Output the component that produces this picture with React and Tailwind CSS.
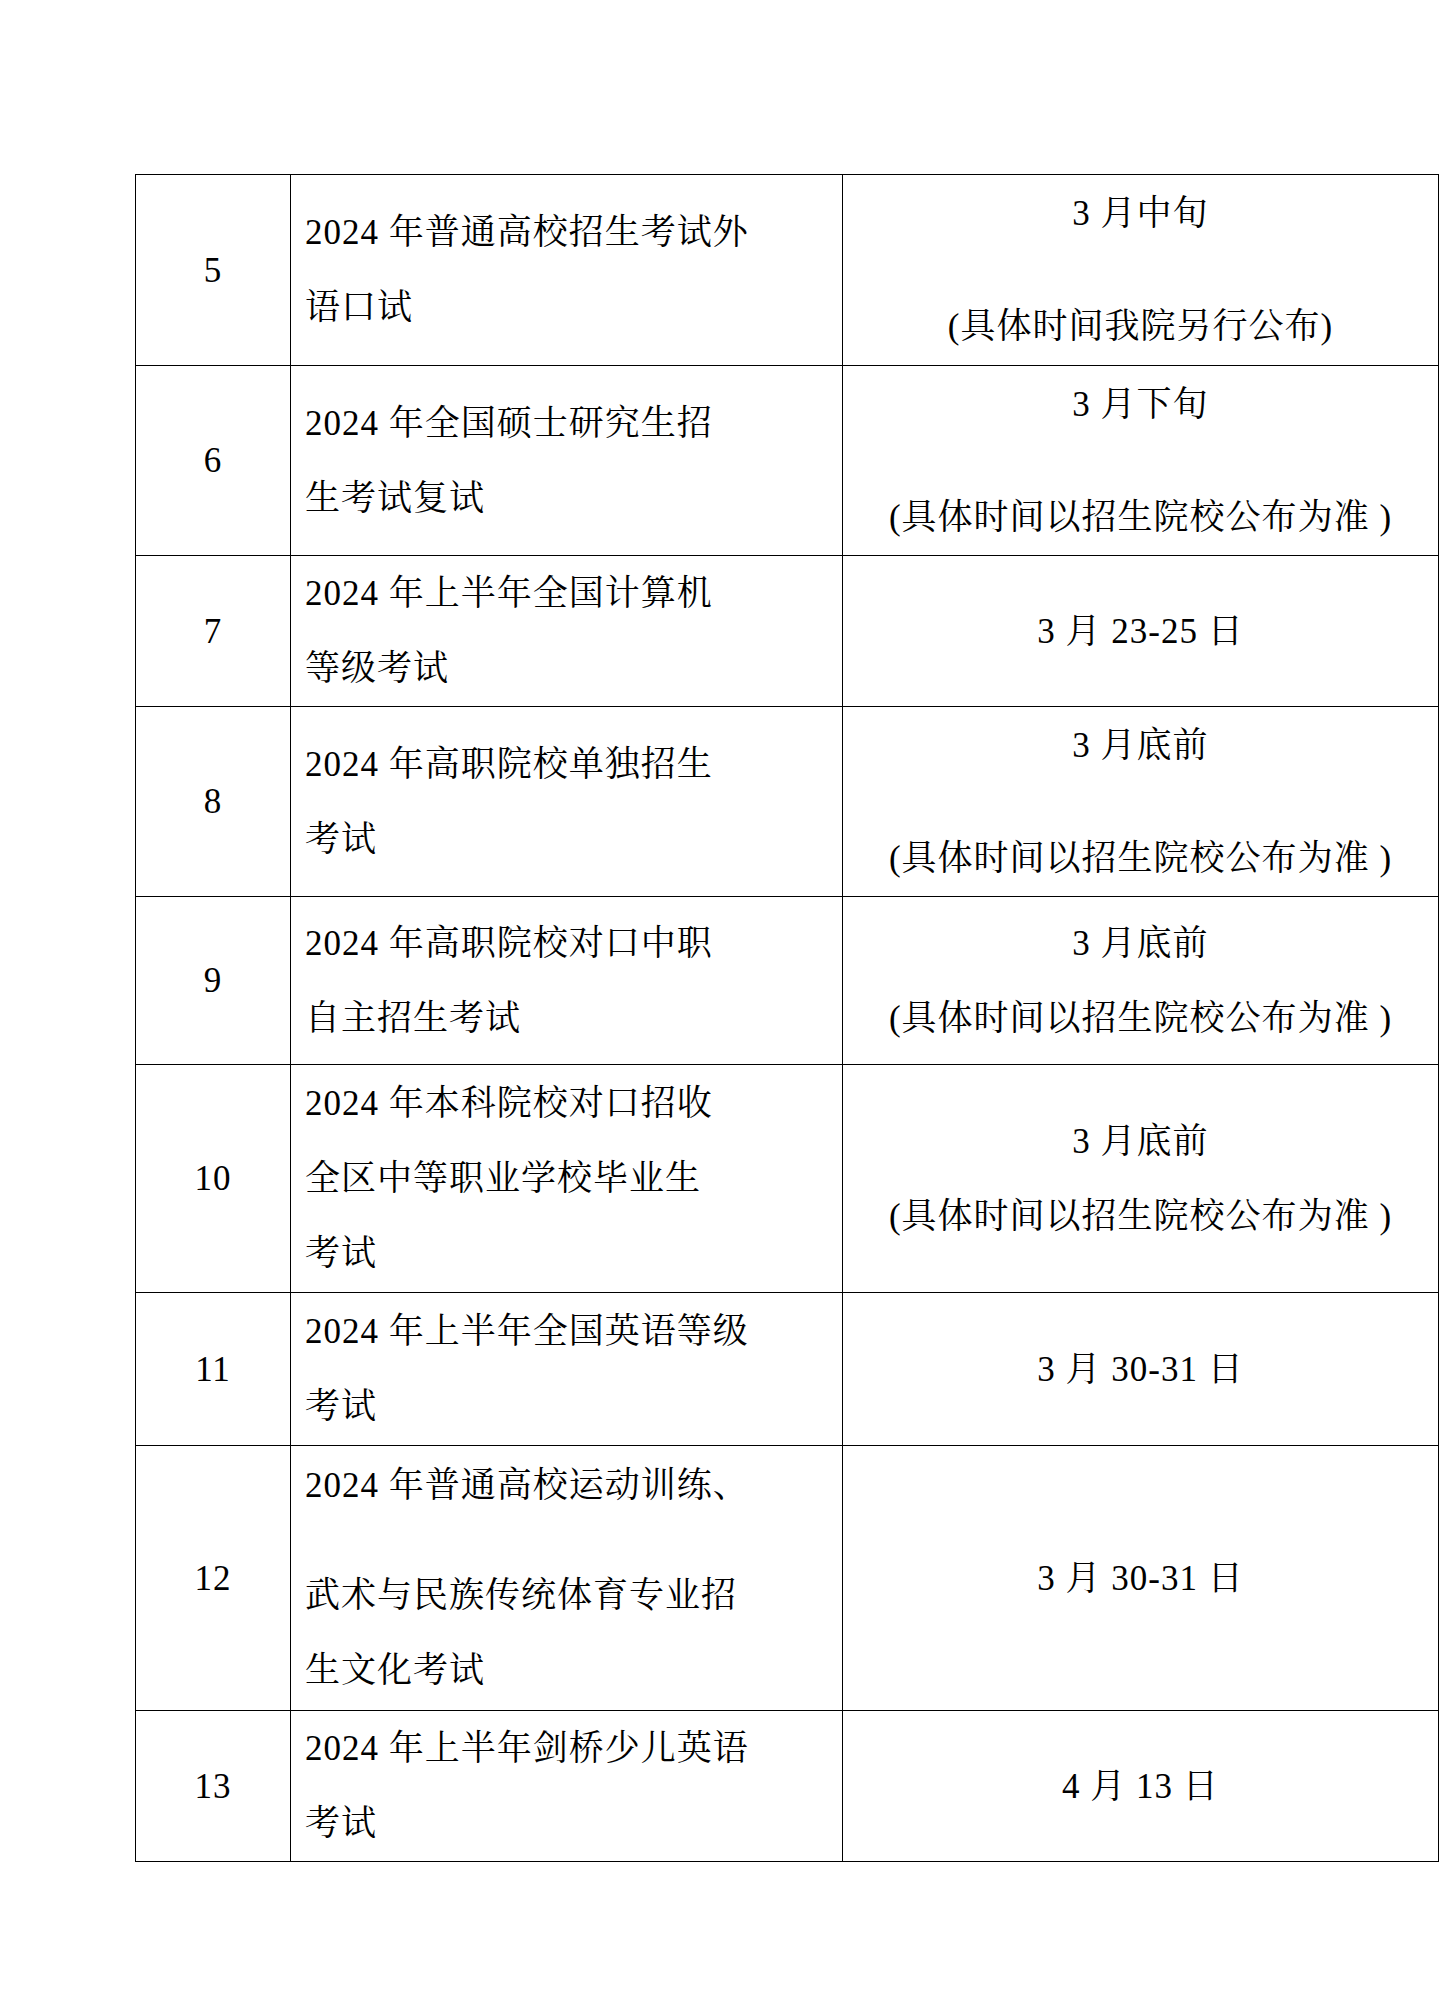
import React from "react";

const rows = [
  {
    no: "5",
    name: ["2024 年普通高校招生考试外", "语口试"],
    time: ["3 月中旬", "(具体时间我院另行公布)"],
    wide: true,
    h: "h-[191px]",
  },
  {
    no: "6",
    name: ["2024 年全国硕士研究生招", "生考试复试"],
    time: ["3 月下旬", "(具体时间以招生院校公布为准 )"],
    wide: true,
    h: "h-[190px]",
  },
  {
    no: "7",
    name: ["2024 年上半年全国计算机", "等级考试"],
    time: ["3 月 23-25 日"],
    h: "h-[151px]",
  },
  {
    no: "8",
    name: ["2024 年高职院校单独招生", "考试"],
    time: ["3 月底前", "(具体时间以招生院校公布为准 )"],
    wide: true,
    h: "h-[190px]",
  },
  {
    no: "9",
    name: ["2024 年高职院校对口中职", "自主招生考试"],
    time: ["3 月底前", "(具体时间以招生院校公布为准 )"],
    h: "h-[168px]",
  },
  {
    no: "10",
    name: ["2024 年本科院校对口招收", "全区中等职业学校毕业生", "考试"],
    time: ["3 月底前", "(具体时间以招生院校公布为准 )"],
    h: "h-[228px]",
  },
  {
    no: "11",
    name: ["2024 年上半年全国英语等级", "考试"],
    time: ["3 月 30-31 日"],
    h: "h-[153px]",
  },
  {
    no: "12",
    name: ["2024 年普通高校运动训练、", "武术与民族传统体育专业招", "生文化考试"],
    time: ["3 月 30-31 日"],
    gapAfterFirst: true,
    h: "h-[265px]",
  },
  {
    no: "13",
    name: ["2024 年上半年剑桥少儿英语", "考试"],
    time: ["4 月 13 日"],
    h: "h-[151px]",
  },
];

function Row({ row }) {
  return (
    <div className={"grid grid-cols-[155px_552px_596px] " + row.h}>
      <div className="flex items-center justify-center border-r border-b border-black">
        {row.no}
      </div>
      <div className="flex flex-col justify-center border-r border-b border-black pl-[14px] whitespace-nowrap">
        {row.name.map((line, i) => (
          <div
            key={i}
            className={row.gapAfterFirst && i === 0 ? "mb-[35px]" : ""}
          >
            {line}
          </div>
        ))}
      </div>
      <div
        className={
          "flex flex-col items-center justify-center border-r border-b border-black whitespace-nowrap " +
          (row.wide ? "gap-[38px]" : "gap-0")
        }
      >
        {row.time.map((line, i) => (
          <div key={i}>{line}</div>
        ))}
      </div>
    </div>
  );
}

export default function App() {
  return (
    <div className="min-h-[2008px] w-[1440px] bg-white pt-[174px] text-black [font-family:'Liberation_Serif','Noto_Serif_CJK_SC','Noto_Sans_CJK_SC',serif] text-[35px] leading-[75px] tracking-[1px]">
      <div className="ml-[135px] w-[1304px] border-t border-l border-black">
        {rows.map((row) => (
          <Row key={row.no} row={row} />
        ))}
      </div>
    </div>
  );
}
